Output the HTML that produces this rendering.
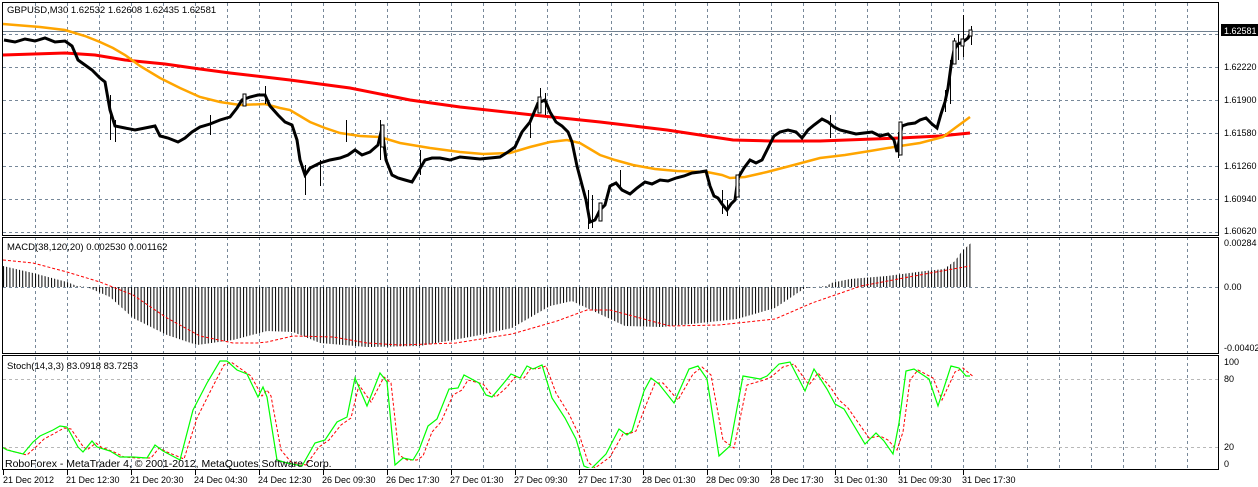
<!DOCTYPE html>
<html><head><meta charset="utf-8"><style>
html,body{margin:0;padding:0;background:#fff;}
svg{display:block;}
text{font-family:"Liberation Sans",sans-serif;}
</style></head><body>
<svg width="1258" height="487" viewBox="0 0 1258 487" xmlns="http://www.w3.org/2000/svg">
<defs>
<pattern id="hist" patternUnits="userSpaceOnUse" x="3" y="0" width="3.2" height="10">
<rect x="0" y="0" width="1" height="10" fill="#000"/>
</pattern>
<clipPath id="cm"><rect x="3" y="3" width="1215" height="232"/></clipPath>
<clipPath id="cs"><rect x="3" y="356" width="1215" height="112"/></clipPath>
</defs>
<rect width="1258" height="487" fill="#fff"/>

<!-- vertical grid -->
<g stroke="#778899" stroke-width="1" stroke-dasharray="3,3">
<path d="M35.5 3V469M67.5 3V469M99.5 3V469M131.5 3V469M163.5 3V469M195.5 3V469M227.5 3V469M259.5 3V469M291.5 3V469M323.5 3V469M355.5 3V469M387.5 3V469M419.5 3V469M451.5 3V469M483.5 3V469M515.5 3V469M547.5 3V469M579.5 3V469M611.5 3V469M643.5 3V469M675.5 3V469M707.5 3V469M739.5 3V469M771.5 3V469M803.5 3V469M835.5 3V469M867.5 3V469M899.5 3V469M931.5 3V469M963.5 3V469M995.5 3V469M1027.5 3V469M1059.5 3V469M1091.5 3V469M1123.5 3V469M1155.5 3V469M1187.5 3V469"/>
<path d="M3 34.5H1219M3 67.5H1219M3 100.5H1219M3 133.5H1219M3 166.5H1219M3 199.5H1219M3 232.5H1219M3 287.5H1219"/>
</g>
<g stroke="#b8b8b8" stroke-width="1" stroke-dasharray="3,3">
<path d="M3 379.5H1219M3 447.5H1219"/>
</g>
<!-- current price line -->
<path d="M3 31.5H1219" stroke="#708090" stroke-width="1"/>

<!-- pane borders -->
<g fill="none" stroke="#000" stroke-width="1">
<rect x="2.5" y="2.5" width="1216" height="233"/>
<rect x="2.5" y="237.5" width="1216" height="116"/>
<rect x="2.5" y="355.5" width="1216" height="114"/>
</g>

<!-- main pane -->
<g clip-path="url(#cm)">
<polyline fill="none" stroke="#ff0000" stroke-width="3" points="3,55 65,53 95,55 125,60 165,64 200,69 230,73 290,80 350,88 410,100 460,107 533,115 600,122 667,130 733,140 770,141 820,141 900,138 940,136 970,133"/>
<polyline fill="none" stroke="#ffa500" stroke-width="2.5" points="3,24 40,27 65,30 85,36 100,42 113,48 125,55 140,66 160,78 180,88 200,97 220,102 240,105 265,104 280,108 290,110 300,116 310,122 325,128 340,133 360,136 380,137 400,143 430,148 460,152 483,154 510,153 530,147 550,142 567,140 580,143 590,149 600,155 615,160 633,165 655,169 677,171 707,172 722,175 730,178 745,177 767,172 790,166 820,158 845,155 870,151 900,146 920,143 943,137 955,128 970,117"/>
<!-- candles (approximate closes) -->
<polyline fill="none" stroke="#000" stroke-width="3" points="4,40 15,42 25,39 35,41 45,38 55,42 65,41 72,46 78,60 85,65 92,70 100,78 105,82 110,110 115,126 125,128 135,130 145,128 155,126 160,136 168,138 178,142 185,138 192,132 200,127 210,124 220,120 230,117 237,108 242,100 250,97 258,95 265,95 270,106 278,115 285,122 292,125 297,140 300,160 305,175 310,168 320,163 330,160 340,158 348,155 355,150 362,155 370,152 378,145 382,128 386,160 392,175 398,178 405,180 412,182 418,172 425,160 432,158 440,158 450,160 460,157 470,158 480,159 490,158 500,157 508,152 515,147 522,132 530,122 538,103 545,100 550,112 556,122 562,126 568,132 572,142 577,166 582,185 586,200 590,222 595,220 600,210 605,205 610,186 616,183 622,190 630,194 637,188 645,182 652,184 660,180 668,181 676,178 684,176 692,173 700,172 706,171 710,186 714,196 718,198 722,204 727,210 731,204 735,200 738,178 744,168 750,160 756,163 762,160 768,148 774,136 780,132 788,130 796,132 802,138 808,130 814,125 822,119 828,122 834,127 840,130 848,132 856,134 864,133 872,132 880,136 888,134 894,140 897,152 902,126 908,124 915,123 920,120 926,118 932,124 937,128 941,114 945,102 948,88 951,66 954,50 958,44 963,42 968,38 971,32"/>
<g stroke="#000" stroke-width="1">
<path d="M963.5 15V57M971.5 26V45M958.5 34V60M954.5 38V64M950.5 60V104M945.5 90V112M540.5 88V110M545.5 93V115M588.5 190V229M592.5 195V228M727.5 200V216M722.5 190V214M305.5 165V195M320.5 160V186M110.5 95V140M115.5 120V142M346.5 120V142M380.5 120V160M898.5 132V158M830.5 115V138M620.5 170V190M210.5 115V135M265.5 86V104M420.5 150V175M530.5 118V138"/>
</g>
<g fill="#fff" stroke="#000" stroke-width="1">
<rect x="953" y="41" width="3" height="23"/><rect x="961" y="39" width="3" height="7"/><rect x="969" y="30" width="3" height="6"/>
<rect x="381" y="125" width="3" height="22"/><rect x="736" y="175" width="3" height="22"/><rect x="599" y="203" width="3" height="18"/>
<rect x="538" y="97" width="3" height="16"/><rect x="899" y="122" width="3" height="33"/><rect x="243" y="94" width="3" height="12"/>
</g>
</g>
<!-- price label -->
<rect x="1221" y="24" width="37" height="12" fill="#000"/>
<text x="1224" y="34" font-size="9" fill="#fff">1.62581</text>

<!-- MACD pane -->
<polygon fill="url(#hist)" points="3,266 33,273 67,282 77,286 87,287 110,297 133,318 167,335 197,345 233,340 267,331 293,332 320,343 367,347 420,346 475,336 512,328 550,306 572,301 587,308 625,326 662,327 700,323 737,319 775,308 805,288 827,286 831,283 850,279 887,276 925,271 944,269 955,261 962,251 971,243 971,287 3,287"/>
<polyline fill="none" stroke="#ff0000" stroke-width="1" stroke-dasharray="3,2" points="3,260 33,263 67,272 100,282 133,295 167,318 200,336 233,343 257,343 267,342 293,336 333,337 367,343 400,345 456,343 512,334 557,321 587,310 610,310 640,318 670,326 719,325 775,319 812,303 861,286 925,274 970,266"/>

<!-- Stoch pane -->
<g clip-path="url(#cs)">
<polyline fill="none" stroke="#ff0000" stroke-width="1" stroke-dasharray="3,2" points="4,448 11,451 27,455 37,446 44,439 57,432 64,428 71,429 82,445 87,450 96,443 101,447 114,452 124,457 137,458 151,458 159,448 167,452 184,459 197,418 211,390 224,365 231,362 241,369 251,376 262,396 267,390 271,396 281,450 291,462 306,465 319,447 329,440 341,425 351,418 359,385 371,402 384,377 391,383 399,455 407,460 417,460 423,456 432,432 441,422 453,395 462,390 468,380 483,384 490,393 496,397 507,387 515,377 524,378 531,368 537,369 546,366 556,393 569,414 580,437 588,462 595,468 610,457 623,434 631,433 636,431 648,400 655,383 663,383 678,400 693,374 702,367 711,375 723,440 734,448 747,385 764,380 771,377 783,367 794,364 809,385 818,373 831,388 839,400 848,408 869,438 880,436 888,440 897,450 903,432 910,380 918,370 933,378 942,400 955,372 963,368 970,374 974,377"/>
<polyline fill="none" stroke="#00ff00" stroke-width="1.2" points="0,446 7,450 23,454 33,442 40,436 53,430 60,426 67,427 78,447 83,452 92,441 97,447 110,451 120,457 133,457 147,458 155,445 163,451 180,460 193,410 207,383 220,361 227,361 237,370 247,374 258,397 263,387 267,397 277,460 287,463 302,466 315,443 325,440 337,422 347,417 355,378 367,406 380,373 387,382 395,465 403,458 413,460 419,450 428,426 437,419 449,389 458,388 464,375 479,383 486,395 492,397 503,384 511,374 520,378 527,366 533,369 542,365 552,398 565,418 576,439 584,466 591,469 606,454 619,429 627,435 632,431 644,391 651,378 659,384 674,403 689,369 698,366 707,379 719,456 730,446 743,376 760,379 767,376 779,364 790,362 805,391 814,369 827,389 835,404 844,409 865,444 876,433 884,441 893,454 899,423 906,371 914,369 929,379 938,406 951,366 959,368 966,376 970,376"/>
</g>

<!-- texts -->
<g fill="#000" font-size="9.5">
<text x="7" y="13">GBPUSD,M30  1.62532 1.62608 1.62435 1.62581</text>
<text x="7" y="250">MACD(38,120,20) 0.002530 0.001162</text>
<text x="7" y="369">Stoch(14,3,3) 83.0918 83.7253</text>
</g>
<text x="5" y="467" font-size="10.5" fill="#000">RoboForex - MetaTrader 4, © 2001-2012, MetaQuotes Software Corp.</text>

<g fill="#000" font-size="9">
<text x="1224" y="70">1.62220</text>
<text x="1224" y="103">1.61900</text>
<text x="1224" y="136">1.61580</text>
<text x="1224" y="169">1.61260</text>
<text x="1224" y="202">1.60940</text>
<text x="1224" y="234">1.60620</text>
<text x="1224" y="246">0.00284</text>
<text x="1224" y="290">0.00</text>
<text x="1224" y="351">-0.00402</text>
<text x="1224" y="365">100</text>
<text x="1224" y="382">80</text>
<text x="1224" y="450">20</text>
<text x="1224" y="467">0</text>
</g>

<!-- date ticks & labels -->
<g stroke="#000" stroke-width="1">
<path d="M3.5 470V475M67.5 470V475M131.5 470V475M195.5 470V475M259.5 470V475M323.5 470V475M387.5 470V475M451.5 470V475M515.5 470V475M579.5 470V475M643.5 470V475M707.5 470V475M771.5 470V475M835.5 470V475M899.5 470V475M963.5 470V475"/>
</g>
<g fill="#000" font-size="9">
<text x="3" y="483">21 Dec 2012</text>
<text x="66" y="483">21 Dec 12:30</text>
<text x="130" y="483">21 Dec 20:30</text>
<text x="194" y="483">24 Dec 04:30</text>
<text x="258" y="483">24 Dec 12:30</text>
<text x="322" y="483">26 Dec 09:30</text>
<text x="386" y="483">26 Dec 17:30</text>
<text x="450" y="483">27 Dec 01:30</text>
<text x="514" y="483">27 Dec 09:30</text>
<text x="578" y="483">27 Dec 17:30</text>
<text x="642" y="483">28 Dec 01:30</text>
<text x="706" y="483">28 Dec 09:30</text>
<text x="770" y="483">28 Dec 17:30</text>
<text x="834" y="483">31 Dec 01:30</text>
<text x="898" y="483">31 Dec 09:30</text>
<text x="962" y="483">31 Dec 17:30</text>
</g>
</svg>
</body></html>
